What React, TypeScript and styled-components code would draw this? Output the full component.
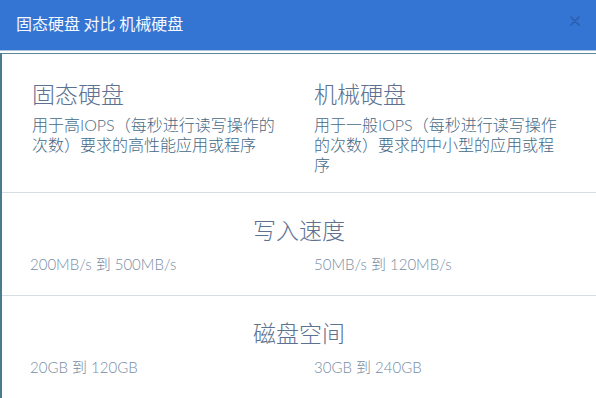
import React from 'react'
import styled, { createGlobalStyle } from 'styled-components'

/*
* Styles
*/

const GlobalStyle = createGlobalStyle`
  html, body {
    margin: 0;
    padding: 0;
    background: #ffffff;
  }

  body {
    font-family: Lato, "Noto Sans CJK SC", sans-serif;
  }
`

const Dialog = styled.div`
  display: flex;
  flex-direction: column;
  height: 398px;
  overflow: hidden;
  width: 596px;
`

const Header = styled.div`
  align-items: center;
  background: #3475d3;
  border-bottom: 1px solid #a9c3dc;
  box-sizing: border-box;
  display: flex;
  height: 54px;
  justify-content: space-between;
  padding: 0 14px 4px 16px;
`

const HeaderTitle = styled.h1`
  color: #f4f8ff;
  font-family: "Noto Sans CJK SC", sans-serif;
  font-size: 16px;
  font-weight: 400;
  margin: 0;
`

const CloseButton = styled.button`
  align-items: center;
  background: none;
  border: none;
  cursor: pointer;
  display: flex;
  height: 14px;
  justify-content: center;
  margin-bottom: 5px;
  padding: 0;
  width: 14px;
`

const Body = styled.div`
  border-left: 2px solid #4b7b8b;
  border-top: 1px solid #5c8795;
  display: flex;
  flex: 1;
  flex-direction: column;
  margin-top: 2px;
`

const CompareRow = styled.div`
  border-bottom: 1px solid #d3dee3;
  display: flex;
  padding: 24px 0 17px 30px;
`

const Column = styled.div`
  display: flex;
  flex-direction: column;
  gap: 7px;
  width: 250px;

  & + & {
    margin-left: 32px;
  }
`

const ColumnTitle = styled.h2`
  color: #5c7290;
  font-family: "Noto Sans CJK SC", sans-serif;
  font-size: 23px;
  font-weight: 300;
  line-height: 30px;
  margin: 0;
`

const Description = styled.p`
  color: #456986;
  font-size: 16px;
  font-weight: 300;
  line-height: 20px;
  margin: 0;
`

const Metric = styled.div<{ $last?: boolean }>`
  border-bottom: ${(p) => (p.$last ? 'none' : '1px solid #d3dee3')};
  display: flex;
  flex-direction: column;
  gap: 10px;
  padding: 21px 0 21px 0;
`

const MetricTitle = styled.h3`
  color: #5c7290;
  font-family: "Noto Sans CJK SC", sans-serif;
  font-size: 23px;
  font-weight: 300;
  line-height: 30px;
  margin: 0;
  text-align: center;
`

const MetricValues = styled.div`
  display: grid;
  grid-template-columns: 284px 1fr;
  padding-left: 28px;
`

const Value = styled.span`
  color: #788da3;
  font-size: 15px;
  font-weight: 300;
  line-height: 20px;
`

/*
* Data
*/

const columns = [
  {
    title: '固态硬盘',
    text: '用于高IOPS（每秒进行读写操作的次数）要求的高性能应用或程序',
  },
  {
    title: '机械硬盘',
    text: '用于一般IOPS（每秒进行读写操作的次数）要求的中小型的应用或程序',
  },
]

const metrics = [
  { title: '写入速度', ssd: '200MB/s 到 500MB/s', hdd: '50MB/s 到 120MB/s' },
  { title: '磁盘空间', ssd: '20GB 到 120GB', hdd: '30GB 到 240GB' },
]

/*
* Components
*/

const CloseIcon = () => (
  <svg width="10" height="10" viewBox="0 0 10 10">
    <path
      d="M1 1 L9 9 M9 1 L1 9"
      stroke="#2a5ca8"
      strokeWidth="1.5"
      strokeLinecap="round"
    />
  </svg>
)

export default function App() {
  return (
    <>
      <GlobalStyle />
      <Dialog>
        <Header>
          <HeaderTitle>固态硬盘 对比 机械硬盘</HeaderTitle>
          <CloseButton aria-label="关闭">
            <CloseIcon />
          </CloseButton>
        </Header>
        <Body>
          <CompareRow>
            {columns.map((c) => (
              <Column key={c.title}>
                <ColumnTitle>{c.title}</ColumnTitle>
                <Description>{c.text}</Description>
              </Column>
            ))}
          </CompareRow>
          {metrics.map((m, i) => (
            <Metric key={m.title} $last={i === metrics.length - 1}>
              <MetricTitle>{m.title}</MetricTitle>
              <MetricValues>
                <Value>{m.ssd}</Value>
                <Value>{m.hdd}</Value>
              </MetricValues>
            </Metric>
          ))}
        </Body>
      </Dialog>
    </>
  )
}
